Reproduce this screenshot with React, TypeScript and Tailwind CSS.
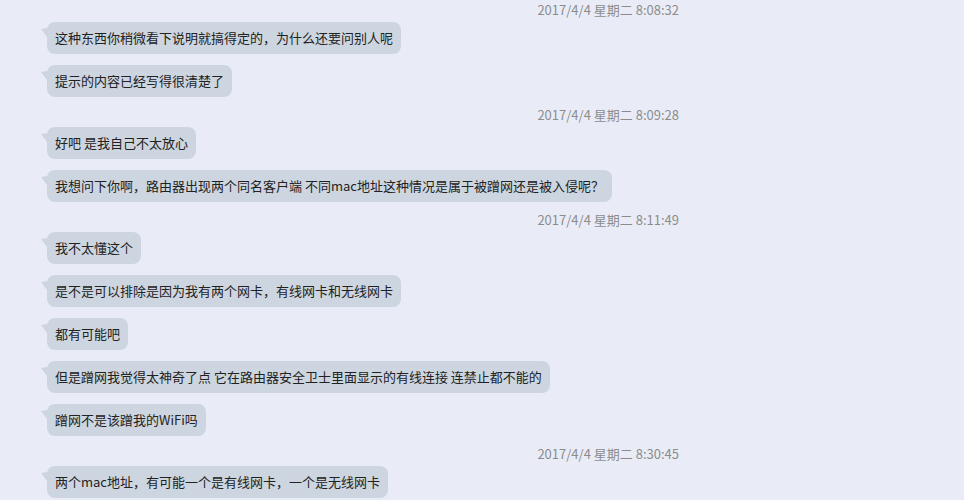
const FONT = "font-['Microsoft_YaHei','Noto_Sans_CJK_SC',sans-serif]"

type Item = { ts: string } | { text: string }

const items: Item[] = [
  { ts: "2017/4/4 星期二 8:08:32" },
  { text: "这种东西你稍微看下说明就搞得定的，为什么还要问别人呢" },
  { text: "提示的内容已经写得很清楚了" },
  { ts: "2017/4/4 星期二 8:09:28" },
  { text: "好吧 是我自己不太放心" },
  { text: "我想问下你啊，路由器出现两个同名客户端 不同mac地址这种情况是属于被蹭网还是被入侵呢？" },
  { ts: "2017/4/4 星期二 8:11:49" },
  { text: "我不太懂这个" },
  { text: "是不是可以排除是因为我有两个网卡，有线网卡和无线网卡" },
  { text: "都有可能吧" },
  { text: "但是蹭网我觉得太神奇了点 它在路由器安全卫士里面显示的有线连接 连禁止都不能的" },
  { text: "蹭网不是该蹭我的WiFi吗" },
  { ts: "2017/4/4 星期二 8:30:45" },
  { text: "两个mac地址，有可能一个是有线网卡，一个是无线网卡" },
]

function Timestamp({ label }: { label: string }) {
  return (
    <div className="flex h-[30px] w-[679px] items-end justify-end pb-[2px]">
      <span className="text-[13px] leading-[20px] text-[#8c8c8c]">{label}</span>
    </div>
  )
}

function Bubble({ text, first }: { text: string; first: boolean }) {
  return (
    <div className={first ? "flex pl-[41px]" : "mt-[11px] flex pl-[41px]"}>
      <svg width="6" height="10" viewBox="0 0 6 10" className="mt-[6px] shrink-0">
        <path d="M0 1 L6 0 L6 9 Z" fill="#cdd6e0" />
      </svg>
      <div className="flex h-[32px] items-center rounded-[8px] bg-[#cdd6e0] px-[8px] text-[13px] text-[#222]">
        {text}
      </div>
    </div>
  )
}

export default function App() {
  return (
    <div className={`h-[500px] w-[964px] overflow-hidden bg-[#e9ecf7] ${FONT}`}>
      <div className="mt-[-8px] flex flex-col">
        {items.map((item, i) => {
          if ("ts" in item) {
            return <Timestamp key={i} label={item.ts} />
          }
          const prev = items[i - 1]
          return <Bubble key={i} text={item.text} first={!!prev && "ts" in prev} />
        })}
      </div>
    </div>
  )
}
